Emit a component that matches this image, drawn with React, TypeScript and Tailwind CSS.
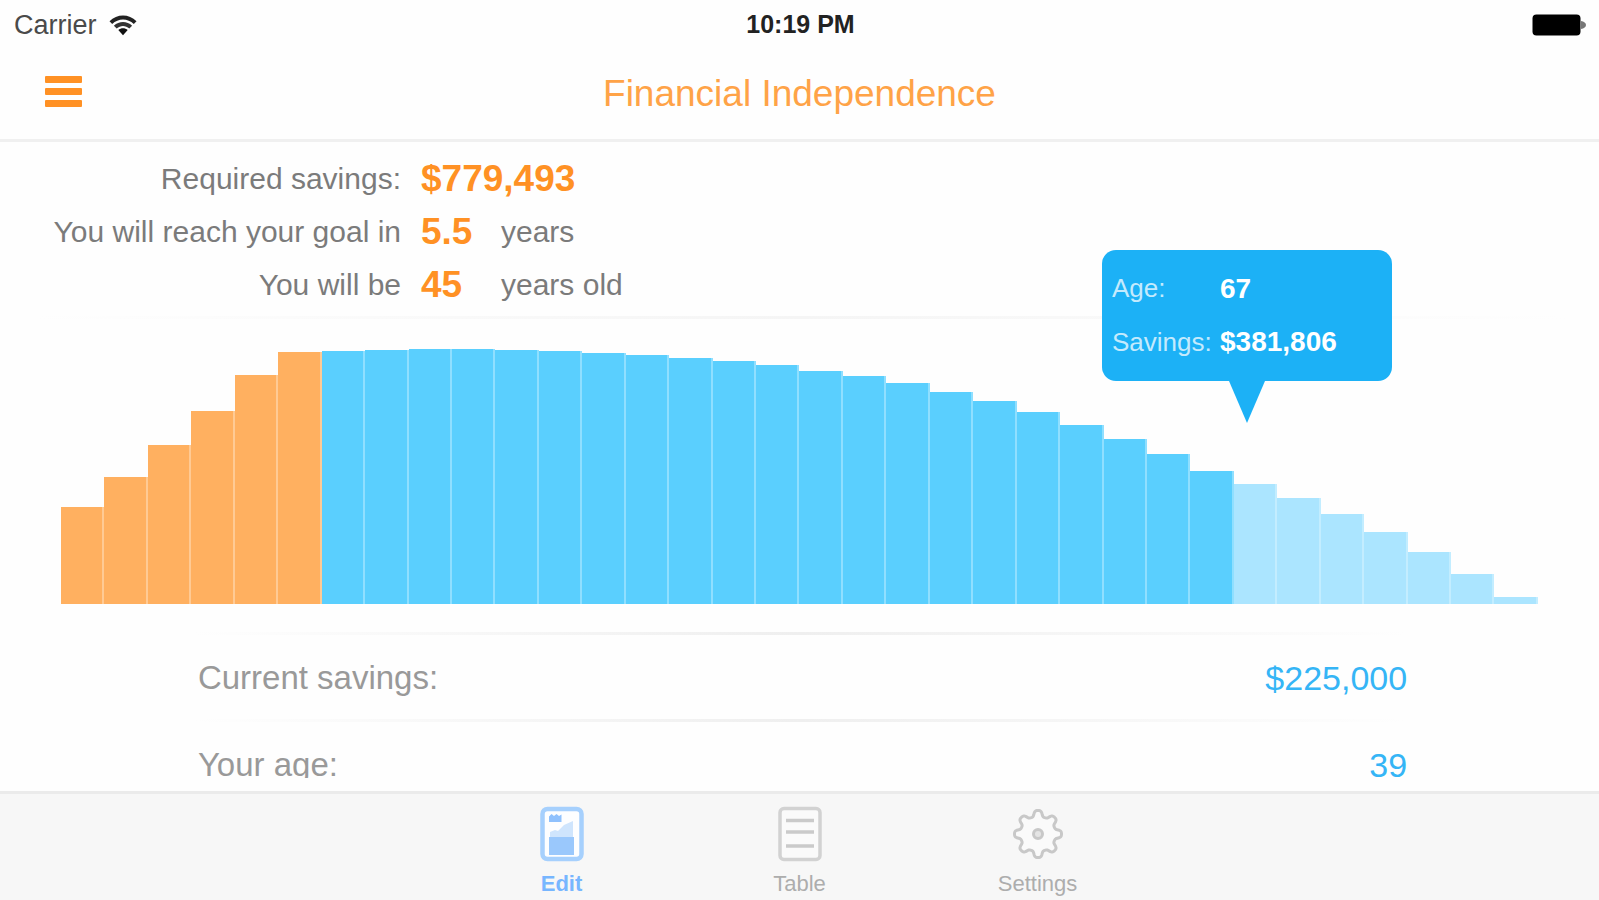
import { useState } from "react";

type Phase = "saving" | "retired" | "remaining";

const CHART_HEIGHT = 255;

const heights = [
  97, 127, 159, 193, 229, 252, 253, 254, 255, 255, 254, 253, 251, 249, 246, 243, 239,
  233, 228, 221, 212, 203, 192, 179, 165, 150, 133, 120, 106, 90, 72, 52, 30, 7,
];

const phaseOf = (i: number): Phase => (i < 6 ? "saving" : i < 27 ? "retired" : "remaining");

const barStyles: Record<Phase, string> = {
  saving: "bg-[#ffb060] border-[#ffca94]",
  retired: "bg-[#5acffe] border-[#8fdfff]",
  remaining: "bg-[#abe5ff] border-[#c3edff]",
};

function WifiIcon() {
  return (
    <svg width="28" height="21" viewBox="0 0 28 21" aria-hidden="true">
      <path d="M0.500 6.200C8 -1.400 20 -1.400 27.500 6.200L24.800 9C18.700 3 9.300 3 3.200 9Z" fill="#222" />
      <path d="M4.900 10.700C10 5.700 18 5.700 23.100 10.700L20.300 13.500C16.700 10 11.300 10 7.700 13.500Z" fill="#333" />
      <path d="M9.300 15C12 12.500 16 12.500 18.700 15L14 20.300Z" fill="#111" />
    </svg>
  );
}

function BatteryIcon() {
  return (
    <svg width="55" height="22" viewBox="0 0 55 22" aria-hidden="true">
      <rect x="0.500" y="0.500" width="48" height="21" rx="4" fill="#000" />
      <path d="M49 7C52 7.500 54 9 54 11S52 14.500 49 15Z" fill="#777" />
    </svg>
  );
}

function EditIcon() {
  return (
    <svg width="46" height="56" viewBox="0 0 46 56" aria-hidden="true">
      <rect x="3.500" y="3" width="39" height="50" rx="5" fill="#fdfeff" stroke="#a6d0fd" strokeWidth="4.500" />
      <path d="M10 10.500L12.500 8L15 10L17.500 8L20 10L22.500 8.500V16H10Z" fill="#8fc1fd" />
      <path d="M11 31V26L16 24L19 25L25 19L34 15V31Z" fill="#cfe5fd" />
      <rect x="10" y="31" width="25" height="18" fill="#9ac8fc" />
    </svg>
  );
}

function TableIcon() {
  return (
    <svg width="46" height="56" viewBox="0 0 46 56" aria-hidden="true">
      <rect x="3" y="2.500" width="40" height="51" rx="4" fill="#fafafa" stroke="#d2d2d2" strokeWidth="3.500" />
      <path d="M9 14.500H37M9 26H37M9 40H37" stroke="#cacaca" strokeWidth="3.500" />
    </svg>
  );
}

function gearPath(cx: number, cy: number) {
  const points: string[] = [];
  for (let i = 0; i <= 144; i++) {
    const a = (i / 144) * Math.PI * 2;
    const wave = Math.tanh(1.8 * Math.cos(8 * a)) / Math.tanh(1.8);
    const r = 20.6 + 2.9 * wave;
    points.push(`${(cx + r * Math.cos(a)).toFixed(2)} ${(cy + r * Math.sin(a)).toFixed(2)}`);
  }
  return `M${points.join("L")}Z`;
}

function SettingsIcon() {
  return (
    <svg width="52" height="56" viewBox="0 0 52 56" aria-hidden="true">
      <path d={gearPath(26, 28)} fill="#fafafa" stroke="#c8c8c8" strokeWidth="3" strokeLinejoin="round" />
      <circle cx="26" cy="28" r="4.500" fill="#e4e4e4" stroke="#c8c8c8" strokeWidth="3" />
    </svg>
  );
}

function Divider({ className }: { className: string }) {
  return (
    <div
      className={`h-[3px] shrink-0 bg-linear-to-r from-transparent to-transparent ${className}`}
    />
  );
}

function Stat({ label, value, unit }: { label: string; value: string; unit?: string }) {
  return (
    <div className="flex h-[53px] items-center text-[30px] text-[#7b7b7b]">
      <span className="w-[401px] text-right">{label}</span>
      <span className="min-w-[100px] pl-5 text-[37px] font-bold text-[#ff9124]">{value}</span>
      {unit && <span>{unit}</span>}
    </div>
  );
}

function Tooltip() {
  return (
    <div className="absolute bottom-[181px] left-[80.3%] flex -translate-x-1/2 flex-col items-center">
      <div className="grid h-[131px] w-[290px] grid-cols-[108px_1fr] items-center rounded-[14px] bg-[#1cb1f6] px-[10px] py-3 text-[26px] text-[#c4eafd]">
        <span>Age:</span>
        <span className="text-[28px] font-bold text-white">67</span>
        <span>Savings:</span>
        <span className="text-[28px] font-bold text-white">$381,806</span>
      </div>
      <svg width="36" height="42" viewBox="0 0 36 42" aria-hidden="true">
        <path d="M0 0H36L18 42Z" fill="#1cb1f6" />
      </svg>
    </div>
  );
}

function Field({ id, label, initial }: { id: string; label: string; initial: string }) {
  const [value, setValue] = useState(initial);
  return (
    <div className="flex h-[84px] shrink-0 items-center justify-between px-[12%] pt-0.5">
      <label htmlFor={id} className="ml-[6px] text-[33px] text-[#999]">
        {label}
      </label>
      <input
        id={id}
        type="text"
        value={value}
        onChange={(e) => setValue(e.target.value)}
        className="w-60 bg-transparent text-right text-[34px] text-[#35b5f6] outline-none"
      />
    </div>
  );
}

const tabs = [
  { name: "Edit", icon: <EditIcon /> },
  { name: "Table", icon: <TableIcon /> },
  { name: "Settings", icon: <SettingsIcon /> },
];

export default function App() {
  const [active, setActive] = useState("Edit");
  return (
    <div className="flex h-screen flex-col overflow-hidden bg-[#fefefe] font-['Liberation_Sans',Arial,sans-serif]">
      <div className="grid h-12 shrink-0 grid-cols-3 items-center pt-0.5 pr-3 pl-[14px]">
        <div className="flex items-center gap-3 text-[27px] text-[#4a4a4a]">
          <span>Carrier</span>
          <WifiIcon />
        </div>
        <span className="text-center text-[25px] font-bold text-[#222]">10:19 PM</span>
        <div className="flex justify-end">
          <BatteryIcon />
        </div>
      </div>

      <header className="grid h-[94px] shrink-0 grid-cols-[1fr_auto_1fr] items-center border-b-[3px] border-[#f0f0f0] px-[45px]">
        <button type="button" aria-label="Menu" className="mb-1 flex w-[37px] flex-col gap-[5px]">
          <span className="h-[7px] rounded-[1px] bg-[#ff9124]" />
          <span className="h-[7px] rounded-[1px] bg-[#ff9124]" />
          <span className="h-[7px] rounded-[1px] bg-[#ff9124]" />
        </button>
        <h1 className="text-[37px] text-[#ffa347]">Financial Independence</h1>
      </header>

      <main className="mb-[13px] flex min-h-0 flex-1 flex-col overflow-hidden">
        <section className="shrink-0 pt-[10px] pb-[5px]">
          <Stat label="Required savings:" value="$779,493" />
          <Stat label="You will reach your goal in" value="5.5" unit="years" />
          <Stat label="You will be" value="45" unit="years old" />
        </section>
        <Divider className="mx-[2%] via-[#f5f5f5]" />

        <section className="shrink-0 px-[61px] pt-[30px] pb-7" aria-label="Savings by age">
          <div className="relative">
            <div className="flex h-[255px] items-end">
              {heights.map((h, i) => (
                <div
                  key={i}
                  className={`flex-1 border-r-2 ${barStyles[phaseOf(i)]}`}
                  style={{ height: `${(h / CHART_HEIGHT) * 100}%` }}
                />
              ))}
            </div>
            <Tooltip />
          </div>
        </section>

        <Divider className="mx-[12%] via-[#efefef]" />
        <Field id="savings" label="Current savings:" initial="$225,000" />
        <Divider className="mx-[12%] via-[#efefef]" />
        <Field id="age" label="Your age:" initial="39" />
      </main>

      <nav className="flex h-[109px] shrink-0 justify-center border-t-[3px] border-[#ebebeb] bg-[#f7f7f7] pt-3">
        {tabs.map(({ name, icon }) => (
          <button
            key={name}
            type="button"
            onClick={() => setActive(name)}
            className={`flex w-[238px] flex-col items-center gap-2 text-[22px] leading-7 ${
              active === name ? "text-[#77b6ff]" : "text-[#adadad]"
            }`}
          >
            {icon}
            <span className={active === name ? "font-bold" : ""}>{name}</span>
          </button>
        ))}
      </nav>
    </div>
  );
}
